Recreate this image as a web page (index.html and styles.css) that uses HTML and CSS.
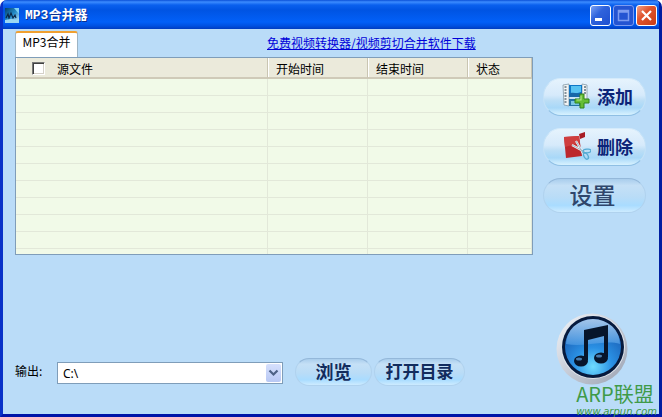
FILE: index.html
```
<!DOCTYPE html>
<html lang="zh-CN">
<head>
	<meta charset="utf-8">
	<title>MP3合并器</title>
	<link rel="stylesheet" href="styles.css">
</head>
<body>
<div class="window">
	<header class="titlebar">
		<svg class="appIcon" width="14" height="15" viewBox="0 0 14 15">
			<defs>
				<linearGradient id="appBg" x1="0" y1="0" x2="1" y2="1">
					<stop offset="0" stop-color="#05426c"/>
					<stop offset=".5" stop-color="#238bc8"/>
					<stop offset="1" stop-color="#d8f2ff"/>
				</linearGradient>
			</defs>
			<rect width="14" height="15" fill="url(#appBg)"/>
			<path d="M9 0h5v6z" fill="#7fd0f5"/>
			<path d="M1 10l2-4 1 4 2-5 2 5 2-3 1 3" fill="none" stroke="#0a2748" stroke-width="1.200"/>
			<path d="M0 15v-3l6-1 8 1v3z" fill="#9cd8f2"/>
		</svg>
		<h1>MP3合并器</h1>
		<div class="windowButtons">
			<button type="button" class="winBtn" aria-label="最小化">
				<svg width="19" height="19"><path d="M4 12h7v3H4z" fill="#fff"/></svg>
			</button>
			<button type="button" class="winBtn winMax" aria-label="最大化" disabled>
				<svg width="19" height="19"><path d="M4.500 4.500h10v10h-10zM4 6h11" fill="none" stroke="#7d9cf0" stroke-width="1.500"/></svg>
			</button>
			<button type="button" class="winBtn winClose" aria-label="关闭">
				<svg width="19" height="19"><path d="M5 5l9 9M14 5l-9 9" fill="none" stroke="#fff" stroke-width="2.200"/></svg>
			</button>
		</div>
	</header>

	<main class="content">
		<div class="topRow">
			<button type="button" class="tab">MP3合并</button>
			<a class="download" href="#">免费视频转换器/视频剪切合并软件下载</a>
		</div>

		<div class="middle">
			<div class="fileList">
				<table>
					<colgroup>
						<col><col class="colTime"><col class="colTime"><col class="colState">
					</colgroup>
					<thead>
						<tr>
							<th><label class="checkAll"><input type="checkbox">源文件</label></th>
							<th>开始时间</th>
							<th>结束时间</th>
							<th>状态</th>
						</tr>
					</thead>
					<tbody>
						<tr><td></td><td></td><td></td><td></td></tr>
						<tr><td></td><td></td><td></td><td></td></tr>
						<tr><td></td><td></td><td></td><td></td></tr>
						<tr><td></td><td></td><td></td><td></td></tr>
						<tr><td></td><td></td><td></td><td></td></tr>
						<tr><td></td><td></td><td></td><td></td></tr>
						<tr><td></td><td></td><td></td><td></td></tr>
						<tr><td></td><td></td><td></td><td></td></tr>
						<tr><td></td><td></td><td></td><td></td></tr>
						<tr><td></td><td></td><td></td><td></td></tr>
						<tr class="lastRow"><td></td><td></td><td></td><td></td></tr>
					</tbody>
				</table>
			</div>

			<div class="actions">
				<button type="button" class="pill pillBig">
					<svg width="29" height="28" viewBox="0 0 29 28">
						<path d="M1 3l6-1v22l-5-1z" fill="#f1f4f5" stroke="#8298a6" stroke-width=".8"/>
						<path d="M20 2l5 1v16l-5 2z" fill="#f1f4f5" stroke="#8298a6" stroke-width=".8"/>
						<path d="M2.500 5h2M2.500 8h2M2.500 11h2M2.500 14h2M2.500 17h2M2.500 20h2M22 5h2M22 8h2M22 11h2" stroke="#60717e" stroke-width="1.300"/>
						<path d="M7 3h13v12H7z" fill="#0f77c6"/>
						<path d="M9 4h10v6L9 13z" fill="#58c2f1"/>
						<path d="M7 12c4-3 8 1 13-2v5H7z" fill="#1767a8"/>
						<path d="M7 17h12v7H7z" fill="#2474a6"/>
						<path d="M9 19h8v4H9z" fill="#79c6e5"/>
						<path d="M18 12h4v5h5v4h-5v5h-4v-5h-5v-4h5z" fill="#65bd35" stroke="#31831c" stroke-width="1"/>
						<path d="M19 13.500v4.500h-4.500" fill="none" stroke="#b3e887" stroke-width="1.200"/>
					</svg>
					添加
				</button>
				<button type="button" class="pill pillBig">
					<svg width="29" height="30" viewBox="0 0 29 30">
						<path d="M2 6l15-1 3 20-16 2z" fill="#bc272d"/>
						<path d="M2 6l15-1 1 7-15 4z" fill="#cf3d3e"/>
						<path d="M17 3l6-2v5l-5 2z" fill="#a81d25"/>
						<path d="M10 14l13 7M14 10l8 14" stroke="#edf5fa" stroke-width="2.200"/>
						<path d="M10 14l13 7M14 10l8 14" stroke="#8a9dae" stroke-width=".7"/>
						<ellipse cx="25" cy="20" rx="4" ry="1.800" fill="none" stroke="#55abd4" stroke-width="1.300" transform="rotate(-5 25 20)"/>
						<ellipse cx="24" cy="25" rx="2" ry="3.500" fill="none" stroke="#55abd4" stroke-width="1.300" transform="rotate(-30 24 25)"/>
					</svg>
					删除
				</button>
				<button type="button" class="pill pillSettings">设置</button>
			</div>
		</div>

		<div class="bottomRow">
			<label class="outputLabel" for="output">输出:</label>
			<div class="outputBox">
				<select id="output">
					<option>C:\</option>
				</select>
				<svg class="arrow" width="15" height="17" viewBox="0 0 15 17"><path d="M3.500 6l4 4 4-4" fill="none" stroke="#4d6185" stroke-width="2.200"/></svg>
			</div>
			<button type="button" class="pill pillBrowse">浏览</button>
			<button type="button" class="pill pillFolder">打开目录</button>
			<svg class="disc" width="74" height="74" viewBox="0 0 74 74">
				<defs>
					<linearGradient id="ring" x1="0" y1="0" x2="1" y2="1">
						<stop offset="0" stop-color="#f3f6fa"/>
						<stop offset=".5" stop-color="#c6cbd6"/>
						<stop offset="1" stop-color="#9aa2b1"/>
					</linearGradient>
					<radialGradient id="blue" cx=".5" cy=".85" r=".85">
						<stop offset="0" stop-color="#6fdcff"/>
						<stop offset=".4" stop-color="#2a90e4"/>
						<stop offset="1" stop-color="#1650a6"/>
					</radialGradient>
					<linearGradient id="gloss" x1="0" y1="0" x2="0" y2="1">
						<stop offset="0" stop-color="#d4ecff"/>
						<stop offset="1" stop-color="#4b9ae4"/>
					</linearGradient>
				</defs>
				<circle cx="37" cy="37" r="35.500" fill="url(#ring)"/>
				<circle cx="38" cy="35" r="32" fill="#dfe4eb"/>
				<circle cx="38" cy="35" r="31" fill="#071a3d"/>
				<circle cx="38" cy="35" r="28" fill="url(#blue)"/>
				<path d="M11 32a27 25 0 0 1 54 0c-15-5-36 4-54 0z" fill="url(#gloss)" opacity=".75"/>
				<path d="M29 18l24-5v32h-4V24l-16 4v20h-4z" fill="#07152b"/>
				<ellipse cx="26" cy="49" rx="7" ry="5.500" fill="#07152b"/>
				<ellipse cx="46" cy="46" rx="7" ry="5.500" fill="#07152b"/>
				<ellipse cx="24" cy="47" rx="3" ry="1.500" fill="#477cae"/>
				<ellipse cx="44" cy="44" rx="3" ry="1.500" fill="#477cae"/>
			</svg>
		</div>
	</main>

	<div class="watermark">
		<div class="markName">ARP联盟</div>
		<div class="markUrl">www.arpun.com</div>
	</div>
</div>
</body>
</html>
```

FILE: styles.css
```
* {box-sizing: border-box;}

body {
	margin: 0;
	background: #fff;
	font-family: "Noto Sans CJK SC", sans-serif;
	font-size: 12px;
	line-height: 16px;
	color: #000;
}
button, select, input {font-family: inherit;margin: 0;}

.window {
	position: relative;
	display: flex;
	flex-direction: column;
	min-height: 100vh;
	border: 3px solid #0831c8;
	border-top: 0;
	border-right-color: #001ea0;
	border-bottom-color: #0014a8;
	border-radius: 7px 7px 0 0;
	background: #badcf8;
}

/* title bar */
.titlebar {
	display: flex;
	align-items: center;
	height: 29px;
	padding: 2px 2px 0 2px;
	border-radius: 4px 4px 0 0;
	background: linear-gradient(#0a50d8 0, #3c8cff 2px, #0a60ee 5px, #0054e3 10px, #0260f8 22px, #0050e0 26px, #003cc0 29px);
}
.titlebar h1 {
	flex: 1;
	margin: 0 0 0 6px;
	font-family: "Liberation Mono", "Noto Sans CJK SC", monospace;
	font-size: 13px;
	line-height: 20px;
	font-weight: bold;
	color: #fff;
	text-shadow: 1px 1px 0 #0a3090;
}
.windowButtons {display: flex;gap: 2px;}
.winBtn {
	width: 21px;
	height: 21px;
	padding: 0;
	border: 1px solid #fff;
	border-radius: 3px;
	background: linear-gradient(135deg, #7ba2f5, #3063dc 40%, #1e4fd0);
}
.winBtn svg {display: block;}
.winMax {border-color: #7d9cf0;background: #2454d2;}
.winClose {background: linear-gradient(135deg, #f0a088, #e0552f 40%, #c93c14);}

/* main area */
.content {
	flex: 1;
	display: flex;
	flex-direction: column;
	padding: 2px 13px 28px 12px;
}
.topRow {
	display: flex;
	align-items: flex-start;
	height: 26px;
}
.tab {
	width: 63px;
	height: 26px;
	padding: 0 0 6px;
	border: 1px solid #9db4c4;
	border-top: 2px solid #f0a030;
	border-bottom: 0;
	border-radius: 3px 3px 0 0;
	background: #fff;
	font-size: 12px;
	line-height: 16px;
}
.download {margin: 4px 0 0 189px;color: #0000d8;text-decoration: underline;}

.middle {
	display: grid;
	grid-template-columns: 1fr 103px;
	gap: 10px;
	align-items: start;
}
.fileList {border: 1px solid #7f9db9;background: #f1fae8;}
.fileList table {
	width: 100%;
	table-layout: fixed;
	border-collapse: separate;
	border-spacing: 0;
}
.colTime {width: 100px;}
.colState {width: 64px;}
.fileList th {
	height: 21px;
	padding: 2px 0 0 8px;
	border-right: 1px solid #c9c5b2;
	border-bottom: 2px solid #cfcab8;
	box-shadow: inset 1px 0 0 #fff;
	background: #ebeadb;
	font-weight: normal;
	text-align: left;
}
.fileList td {
	height: 17px;
	padding: 0;
	border-right: 1px solid #e2e8d9;
	border-bottom: 1px solid #e2e8d9;
}
.fileList .lastRow td {height: 5px;border-bottom: 0;}
.checkAll {display: flex;align-items: center;gap: 12px;padding-left: 8px;}
.checkAll input {
	appearance: none;
	width: 13px;
	height: 13px;
	border: 1px solid #777;
	border-right-color: #fff;
	border-bottom-color: #fff;
	background: #fff;
	box-shadow: inset 1px 1px 0 #404040, inset -1px -1px 0 #d4d0c8;
}

/* glossy buttons */
.pill {
	display: flex;
	align-items: center;
	justify-content: center;
	padding: 0 0 2px;
	border: 1px solid #b0d2ee;
	border-top-color: #94b8da;
	border-radius: 18px;
	background: linear-gradient(#a9cdec, #c5e0f6 20%, #b9dcf7 55%, #a9dcff 80%, #cdebff);
	color: #122c5e;
	font-size: 17px;
	line-height: 24px;
	font-weight: bold;
	white-space: nowrap;
}
.actions {
	display: flex;
	flex-direction: column;
	gap: 12px;
	padding-top: 21px;
}
.pillBig {
	height: 38px;
	justify-content: flex-end;
	gap: 6px;
	padding-right: 12px;
	border-color: #d5ebfb #c5e2f7 #8fbfe4;
	background: linear-gradient(#e6f3fd, #d6eafb 45%, #bcdef6 60%, #a8d8f8 80%, #d8f2ff);
	color: #0b2478;
	font-size: 18px;
}
.pillSettings {
	height: 35px;
	padding: 0 4px 4px 0;
	font-size: 23px;
	font-weight: 500;
	color: #2f466c;
}
.pillBrowse {width: 77px;height: 28px;margin-left: 12px;font-size: 18px;}
.pillFolder {width: 91px;height: 28px;margin-left: 2px;}

/* output row */
.bottomRow {
	display: flex;
	align-items: flex-end;
	margin-top: auto;
}
.outputLabel {width: 42px;padding-bottom: 7px;}
.outputBox {position: relative;width: 226px;padding-bottom: 2px;}
.outputBox select {
	display: block;
	appearance: none;
	width: 100%;
	height: 22px;
	padding: 0 20px 0 5px;
	border: 1px solid #7f9db9;
	border-radius: 0;
	background: #fff;
	font-family: "Noto Sans", sans-serif;
	font-size: 12px;
	color: #000;
}
.arrow {
	position: absolute;
	top: 2px;
	right: 2px;
	height: 18px;
	border-radius: 2px;
	background: linear-gradient(#d6e0fd, #b8c8f4);
	pointer-events: none;
}
.disc {margin: 0 17px 0 auto;}

.watermark {
	position: absolute;
	right: 2px;
	bottom: -3px;
	color: #3f9a48;
	text-align: left;
}
.markName {font-size: 20px;line-height: 25px;}
.markUrl {
	font-family: "DejaVu Sans", sans-serif;
	font-size: 10px;
	line-height: 11px;
	font-style: italic;
}
```
